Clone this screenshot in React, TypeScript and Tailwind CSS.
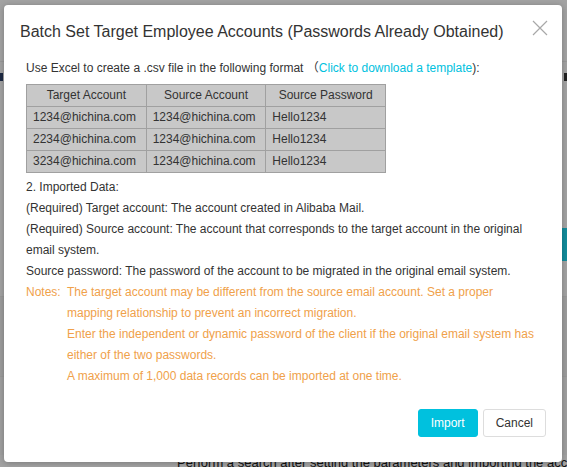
const rows = [
  { target: '1234@hichina.com', source: '1234@hichina.com', password: 'Hello1234' },
  { target: '2234@hichina.com', source: '1234@hichina.com', password: 'Hello1234' },
  { target: '3234@hichina.com', source: '1234@hichina.com', password: 'Hello1234' },
];

const notes = [
  'The target account may be different from the source email account. Set a proper mapping relationship to prevent an incorrect migration.',
  'Enter the independent or dynamic password of the client if the original email system has either of the two passwords.',
  'A maximum of 1,000 data records can be imported at one time.',
];

const CloseIcon = () => (
  <svg width="16" height="16" viewBox="0 0 16 16" fill="none" stroke="currentColor" strokeWidth="1.2">
    <path d="M1 1L15 15M15 1L1 15" />
  </svg>
);

const App = () => {
  return (
    <div className="relative h-[467px] w-full overflow-hidden bg-[#a3a3a3] font-['Liberation_Sans','Noto_Sans_CJK_SC',sans-serif] text-[12px] text-[#333]">
      {/* Dimmed page behind the dialog */}
      <div className="flex h-full flex-col">
        <div className="h-[62px] shrink-0 border-b border-[#999]" />
        <div className="flex h-[30px] shrink-0 items-center justify-between">
          <span className="h-[8px] w-[3px] bg-[#1d2a44]" />
          <span className="h-[8px] w-[3px] bg-[#222]" />
        </div>
        <div className="h-[136px] shrink-0" />
        <div className="flex shrink-0 justify-end">
          <span className="h-[33px] w-[6px] bg-[#128c9c]" />
        </div>
        <div className="h-[36px] shrink-0 border-b border-[#999]" />
        <div className="h-[80px] shrink-0 border-b border-[#999] bg-[#9d9d9d]" />
        <div className="h-[78px] shrink-0 bg-[#a0a0a0]" />
        <div className="shrink-0 whitespace-nowrap pl-[177px] text-[13px] leading-[16px] text-[#111]">
          Perform a search after setting the parameters and importing the accounts
        </div>
      </div>

      {/* Dialog */}
      <div className="absolute left-[4px] top-[5px] flex h-[457px] w-[558px] flex-col rounded-[4px] bg-white shadow-[0_1px_6px_rgba(0,0,0,0.25)]">
        <div className="flex items-start justify-between pl-[16px] pr-[14px] pt-[15px]">
          <h1 className="text-[16px] leading-[24px] text-[#333]">
            Batch Set Target Employee Accounts (Passwords Already Obtained)
          </h1>
          <button className="text-[#a8a8a8]">
            <CloseIcon />
          </button>
        </div>

        <div className="mt-[14px] pl-[22px] pr-[26px] leading-[21px]">
          <p>
            Use Excel to create a .csv file in the following format （
            <span className="text-[#00c1de]">Click to download a template</span>):
          </p>

          <table className="mt-[5px] w-[360px] table-fixed border-collapse bg-[#c8c8c8]">
            <thead>
              <tr className="h-[22px]">
                <th className="border border-[#a0a0a0] font-normal">Target Account</th>
                <th className="border border-[#a0a0a0] font-normal">Source Account</th>
                <th className="border border-[#a0a0a0] font-normal">Source Password</th>
              </tr>
            </thead>
            <tbody>
              {rows.map((row, i) => (
                <tr key={i} className="h-[22px]">
                  <td className="border border-[#a0a0a0] pl-[6px]">{row.target}</td>
                  <td className="border border-[#a0a0a0] pl-[6px]">{row.source}</td>
                  <td className="border border-[#a0a0a0] pl-[6px]">{row.password}</td>
                </tr>
              ))}
            </tbody>
          </table>

          <div className="mt-[4px]">
            <p>2. Imported Data:</p>
            <p>(Required) Target account: The account created in Alibaba Mail.</p>
            <p>(Required) Source account: The account that corresponds to the target account in the original email system.</p>
            <p>Source password: The password of the account to be migrated in the original email system.</p>
            <div className="flex text-[#f0a14a]">
              <span className="w-[41px] shrink-0">Notes:</span>
              <div>
                {notes.map((note, i) => (
                  <p key={i}>{note}</p>
                ))}
              </div>
            </div>
          </div>
        </div>

        <div className="mt-[22px] flex justify-end gap-[5px] pr-[16px]">
          <button className="h-[28px] rounded-[3px] border border-[#00c1de] bg-[#00c1de] px-[12px] text-white">
            Import
          </button>
          <button className="h-[28px] rounded-[3px] border border-[#ddd] bg-white px-[12px] text-[#333]">
            Cancel
          </button>
        </div>
      </div>
    </div>
  );
};

export default App;
